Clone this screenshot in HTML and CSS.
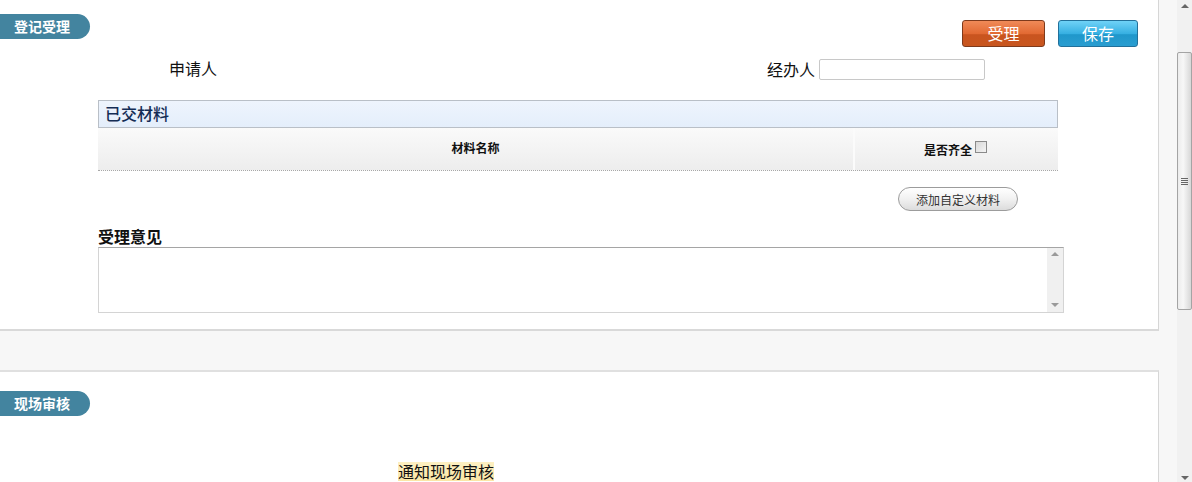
FILE: index.html
```html
<!DOCTYPE html>
<html lang="zh-CN">
<head>
<meta charset="utf-8">
<title>登记受理</title>
<link rel="stylesheet" href="styles.css">
</head>
<body>
<div class="page">
  <main class="content">
    <section class="panel panel-first">
      <div class="panel-head">
        <div class="badge">登记受理</div>
        <div class="actions">
          <button class="btn btn-orange">受理</button>
          <button class="btn btn-blue">保存</button>
        </div>
      </div>
      <div class="block">
        <div class="people">
          <div class="applicant">申请人</div>
          <div class="handler">
            <span>经办人</span>
            <span class="input"></span>
          </div>
        </div>
        <div class="materials-title">已交材料</div>
        <div class="materials-head">
          <div class="col-name">材料名称</div>
          <div class="col-done">是否齐全<span class="checkbox"></span></div>
        </div>
        <div class="add-row">
          <button class="pill">添加自定义材料</button>
        </div>
        <div class="opinion-label">受理意见</div>
        <div class="textarea">
          <div class="ta-scroll">
            <span class="tri-up small"></span>
            <span class="tri-down small"></span>
          </div>
        </div>
      </div>
    </section>
    <section class="panel panel-second">
      <div class="panel-head">
        <div class="badge">现场审核</div>
      </div>
      <div class="notice-row">
        <span class="notice">通知现场审核</span>
      </div>
    </section>
  </main>
  <div class="scrollbar">
    <span class="tri-up"></span>
    <div class="thumb"><span class="grip"></span></div>
    <span class="tri-down"></span>
  </div>
</div>
</body>
</html>
```

FILE: styles.css
```css
html, body {
  margin: 0;
  padding: 0;
}
body {
  background: #f7f7f7;
  font-family: "Noto Sans CJK SC", "Noto Sans", sans-serif;
  color: #111;
}
.page {
  display: flex;
  height: 482px;
  overflow: hidden;
}
.content {
  width: 1159px;
  display: flex;
  flex-direction: column;
  gap: 39px;
}
.panel {
  background: #fff;
  border-right: 1px solid #d6d6d6;
  box-sizing: border-box;
  flex-shrink: 0;
}
.panel-first {
  height: 331px;
  border-bottom: 2px solid #d9d9d9;
  padding: 14px 20px 0 0;
}
.panel-second {
  height: 140px;
  border-top: 2px solid #e0e0e0;
  padding-top: 19px;
}
.panel-head {
  display: flex;
  justify-content: space-between;
  align-items: flex-start;
}
.badge {
  width: 90px;
  height: 25px;
  box-sizing: border-box;
  background: #43849f;
  border-radius: 0 13px 13px 0;
  color: #fff;
  font-weight: bold;
  font-size: 14px;
  line-height: 25px;
  padding-left: 14px;
}
.actions {
  display: flex;
  gap: 13px;
  margin-top: 6px;
}
.btn {
  height: 27px;
  border-radius: 3px;
  color: #fff;
  font-family: inherit;
  font-size: 16px;
  line-height: 23px;
  padding: 0;
  cursor: pointer;
}
.btn-orange {
  width: 83px;
  background: linear-gradient(#f08a58 0%, #e26a33 50%, #c9541f 55%, #c8561f 100%);
  border: 1px solid #7e3a1c;
}
.btn-blue {
  width: 80px;
  background: linear-gradient(#6fd2f7 0%, #37b0e2 50%, #1f97cb 55%, #2a9dd0 100%);
  border: 1px solid #22709a;
}
.block {
  margin-left: 98px;
  width: 960px;
}
.people {
  display: flex;
  justify-content: space-between;
  align-items: center;
  margin-top: 12px;
  height: 21px;
  font-size: 16px;
}
.applicant {
  padding-left: 71px;
  margin-top: -3px;
}
.handler {
  display: flex;
  align-items: center;
  gap: 4px;
  margin-right: 73px;
}
.handler span:first-child {
  margin-top: -2px;
}
.input {
  width: 164px;
  height: 19px;
  border: 1px solid #c8c8c8;
  border-radius: 2px;
  background: #fff;
}
.materials-title {
  margin-top: 20px;
  height: 26px;
  border: 1px solid #b9bfc7;
  background: linear-gradient(#eef4fd, #e4eefb);
  color: #142c55;
  font-size: 16px;
  font-weight: 500;
  line-height: 25px;
  padding-left: 6px;
}
.materials-head {
  display: grid;
  grid-template-columns: 757px 1fr;
  height: 42px;
  background: linear-gradient(#fafafa, #ededed);
  border-bottom: 1px dotted #a8a8a8;
  font-size: 12px;
  font-weight: bold;
}
.col-name {
  text-align: center;
  line-height: 40px;
  border-right: 2px solid #fbfbfb;
}
.col-done {
  display: flex;
  align-items: center;
  justify-content: center;
  gap: 3px;
  padding-right: 2px;
}
.checkbox {
  width: 10px;
  height: 10px;
  border: 1px solid #8a8a8a;
  background: linear-gradient(135deg, #d8d8d8, #f4f4f4);
  margin-top: -4px;
}
.add-row {
  display: flex;
  justify-content: flex-end;
  padding-right: 40px;
  margin-top: 16px;
}
.pill {
  width: 120px;
  height: 24px;
  border: 1px solid #9c9c9c;
  border-radius: 12px;
  background: linear-gradient(#ffffff, #f1f1f1 50%, #dcdcdc);
  color: #333;
  font-family: inherit;
  font-size: 12px;
  padding: 0;
}
.opinion-label {
  margin-top: 15px;
  font-size: 16px;
  font-weight: bold;
  line-height: 20px;
}
.textarea {
  width: 966px;
  height: 66px;
  box-sizing: border-box;
  border: 1px solid #d4d4d4;
  border-top-color: #a5a5a5;
  display: flex;
  justify-content: flex-end;
  margin-top: 1px;
}
.ta-scroll {
  width: 16px;
  background: #f0f0f0;
  display: flex;
  flex-direction: column;
  justify-content: space-between;
  align-items: center;
  padding: 4px 0 5px;
}
.tri-up, .tri-down {
  width: 0;
  height: 0;
  border-left: 4px solid transparent;
  border-right: 4px solid transparent;
}
.tri-up {
  border-bottom: 4px solid #666;
}
.tri-down {
  border-top: 4px solid #666;
}
.tri-up.small {
  border-bottom-color: #9a9a9a;
}
.tri-down.small {
  border-top-color: #9a9a9a;
}
.notice-row {
  margin-top: 43px;
  padding-left: 398px;
}
.notice {
  display: inline-block;
  font-size: 16px;
  line-height: 19px;
  background: linear-gradient(#fdf0c2, #fbe6a6);
}
.scrollbar {
  margin-left: 18px;
  width: 15px;
  background: #f1f1f1;
  display: flex;
  flex-direction: column;
  align-items: center;
  padding: 4px 0 2px;
  box-sizing: border-box;
}
.thumb {
  margin-top: 44px;
  width: 15px;
  height: 258px;
  box-sizing: border-box;
  border: 1px solid #a4a4a4;
  border-radius: 2px;
  background: linear-gradient(90deg, #ececec, #f7f7f7 40%, #d7d7d7);
  display: flex;
  align-items: center;
  justify-content: center;
  margin-bottom: auto;
}
.grip {
  width: 7px;
  height: 7px;
  background: repeating-linear-gradient(#666 0 1px, transparent 1px 2px);
}
```
